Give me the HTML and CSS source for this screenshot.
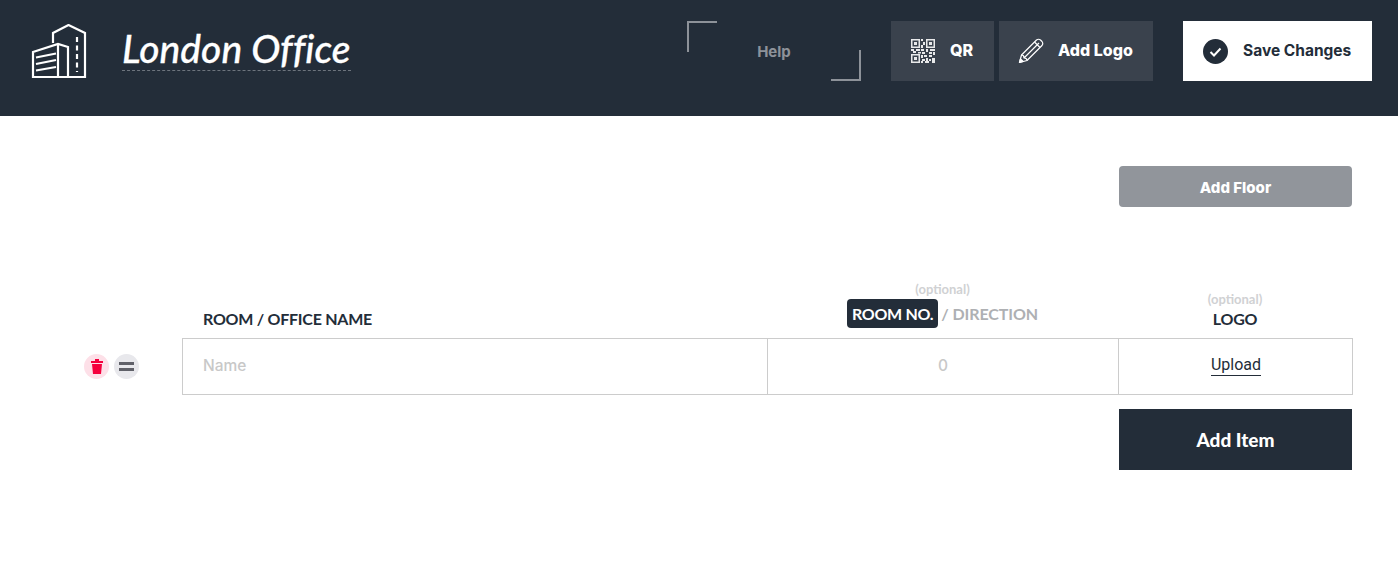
FILE: index.html
```html
<!DOCTYPE html>
<html lang="en">
<head>
	<meta charset="UTF-8">
	<title>London Office</title>
	<link rel="stylesheet" href="styles.css">
</head>
<body>
	<header class="topbar">
		<svg class="building" width="56" height="56" viewBox="0 0 56 56" fill="none" stroke="#fff" stroke-width="2.200">
			<path d="M22 19V9L37.500 1 54 9V53H2V28L27 20 37 23V53"/>
			<path d="M27 20V53M5 33.500L25 29.500M5 40L25 36M5 46.500L25 43"/>
			<path d="M46 13V48" stroke-dasharray="5 3.500"/>
		</svg>
		<h1 class="title">London Office</h1>
		<a class="help">Help</a>
		<div class="tools">
			<a class="tool tool-qr">
				<svg width="24" height="24" viewBox="0 0 24 24" fill="#e8e9ea">
					<path fill-rule="evenodd" d="M0 0h9v9H0zM1.500 1.500v6h6v-6zM15 0h9v9h-9zM16.500 1.500v6h6v-6zM0 15h9v9H0zM1.500 16.500v6h6v-6z"/>
					<path d="M3 3h3v3H3zM18 3h3v3h-3zM3 18h3v3H3zM10 0h2v2h-2zM12 3h2v3h-2zM10 6h2v3h-2zM0 10h3v2H0zM5 10h4v2H5zM10 10h3v2h-3zM15 10h2v3h-2zM19 10h5v2h-5zM2 12h3v2H2zM7 13h3v1.500H7zM11 13h3v2h-3zM18 13h3v2h-3zM22 13h2v3h-2zM10 16h2v3h-2zM13 16h3v2h-3zM18 16h3v2h-3zM11 20h3v2h-3zM15 19h2v3h-2zM18 20h2v2h-2zM21 19h3v5h-3zM10 22h2v2h-2zM14 22h4v2h-4z"/>
				</svg>
				<span class="tool-label">QR</span>
			</a>
			<a class="tool tool-logo">
				<svg width="26" height="26" viewBox="0 0 26 26" fill="none" stroke="#fff" stroke-width="1.200" stroke-linejoin="round">
					<path d="M1.500 24.500L3.500 17 18.500 2Q20.500.500 22.500 2L24 3.500Q25.500 5.500 24 7.500L9 22.500z"/>
					<path d="M3.500 17Q6 17 6 20 9 20 9 22.500M6 20L21 5M16.500 4L22 9.500"/>
					<path d="M1.500 24.500L2.500 20.800 5.200 23.500z" fill="#fff"/>
				</svg>
				<span class="tool-label">Add Logo</span>
			</a>
		</div>
		<a class="save">
			<svg width="25" height="25" viewBox="0 0 25 25">
				<circle cx="12.500" cy="12.500" r="12.500" fill="#232d39"/>
				<path d="M7.500 13l3.500 3.500 6.500-7" fill="none" stroke="#fff" stroke-width="2"/>
			</svg>
			<span class="tool-label">Save Changes</span>
		</a>
	</header>

	<main class="content">
		<div class="floor-bar">
			<a class="add-floor">Add Floor</a>
		</div>

		<div class="col-heads">
			<div class="head head-name">ROOM / OFFICE NAME</div>
			<div class="head head-room">
				<span class="optional">(optional)</span>
				<div class="room-switch"><span class="room-on">ROOM NO.</span> <span class="room-off">/ DIRECTION</span></div>
			</div>
			<div class="head head-logo">
				<span class="optional">(optional)</span>
				<div>LOGO</div>
			</div>
		</div>

		<div class="item-row">
			<div class="handles">
				<a class="round round-delete">
					<svg width="12" height="15" viewBox="0 0 12 15" fill="#f5003d">
						<path d="M0 2h4V0h4v2h4v2H0zM1 5h10l-1 10H2z"/>
					</svg>
				</a>
				<a class="round round-move"><span class="bars"></span></a>
			</div>
			<div class="cells">
				<div class="cell cell-name">Name</div>
				<div class="cell cell-room">0</div>
				<div class="cell cell-logo"><a class="upload">Upload</a></div>
			</div>
		</div>

		<div class="item-foot">
			<a class="add-item">Add Item</a>
		</div>
	</main>
</body>
</html>
```

FILE: styles.css
```css
html,body {
	padding: 0;
	margin: 0;
}
body {
	background: #fff;
	font-family: "Inter", "Liberation Sans", sans-serif;
	color: #232d39;
}
a {
	display: block;
}

/* top bar */
.topbar {
	display: flex;
	align-items: center;
	height: 116px;
	padding: 0 26px 14px 31px;
	box-sizing: border-box;
	background: #232d39;
}
.building {
	margin-top: 1px;
}
.title {
	margin: 0 0 4px 35px;
	padding-bottom: 2px;
	border-bottom: 1px dashed #6d747d;
	font: italic 500 39px/40px "Lato", sans-serif;
	letter-spacing: 0.02px;
	-webkit-text-stroke: 0.3px #fff;
	color: #fff;
}
.help {
	position: relative;
	width: 174px;
	height: 60px;
	margin-left: auto;
	font-size: 15px;
	font-weight: 700;
	line-height: 61px;
	text-align: center;
	color: #8d9299;
}
.help::before, .help::after {
	content: "";
	position: absolute;
	width: 28px;
	height: 29px;
	border: 0 solid #8d9299;
}
.help::before {
	top: 0;
	left: 0;
	border-width: 2px 0 0 2px;
}
.help::after {
	right: 0;
	bottom: 0;
	border-width: 0 2px 2px 0;
}
.tools {
	display: flex;
	gap: 5px;
	margin-left: 30px;
}
.tool {
	display: flex;
	align-items: center;
	height: 60px;
	background: #3a424d;
	font-size: 16px;
	font-weight: 800;
	color: #fff;
}
.tool-label {
	margin-bottom: 2px;
}
.tool-qr {
	width: 103px;
	padding-left: 20px;
	gap: 15px;
	box-sizing: border-box;
}
.tool-logo {
	width: 154px;
	padding-left: 19px;
	gap: 14px;
	box-sizing: border-box;
}
.save {
	display: flex;
	align-items: center;
	gap: 15px;
	width: 189px;
	height: 60px;
	margin-left: 30px;
	padding-left: 20px;
	box-sizing: border-box;
	background: #fff;
	font-size: 15.500px;
	font-weight: 700;
	white-space: nowrap;
	color: #232d39;
}

/* content */
.content {
	padding: 50px 46px 0 0;
}
.floor-bar {
	display: flex;
	justify-content: flex-end;
}
.add-floor {
	width: 233px;
	height: 41px;
	border-radius: 4px;
	background: #91959b;
	font-size: 15px;
	font-weight: 800;
	line-height: 43px;
	text-align: center;
	color: #fff;
}

.col-heads {
	display: flex;
	align-items: flex-end;
	margin: 72px 0 0 182px;
	padding-bottom: 9px;
	font: 700 16px/20px "Lato", sans-serif;
	letter-spacing: -0.25px;
}
.head-name {
	width: 564px;
	padding-left: 21px;
}
.head-room {
	width: 351px;
	margin-bottom: 1px;
	text-align: center;
}
.head-logo {
	flex: 1;
	text-align: center;
}
.optional {
	display: block;
	font-size: 13px;
	line-height: 20px;
	letter-spacing: 0;
	color: #d0d1d3;
}
.room-switch {
	display: flex;
	justify-content: center;
	align-items: center;
	gap: 3px;
	height: 29px;
}
.room-on {
	padding: 0 5px;
	border-radius: 4px;
	background: #232d39;
	line-height: 29px;
	letter-spacing: -0.3px;
	color: #fff;
}
.room-off {
	letter-spacing: -0.1px;
	color: #aeb0b3;
}

.item-row {
	display: flex;
	align-items: center;
	margin-right: -1px;
}
.handles {
	display: flex;
	gap: 5px;
	width: 98px;
	padding-left: 84px;
}
.round {
	display: flex;
	justify-content: center;
	align-items: center;
	width: 25px;
	height: 25px;
	border-radius: 50%;
}
.round-delete {
	background: #fde0e8;
}
.round-move {
	background: #e8e8ec;
}
.bars {
	width: 15px;
	height: 3px;
	border-top: 3px solid #5f6068;
	border-bottom: 3px solid #5f6068;
}
.cells {
	display: flex;
	flex: 1;
	height: 57px;
	box-sizing: border-box;
	border: 1px solid #ccc;
}
.cell {
	line-height: 53px;
	font-size: 15.500px;
	font-weight: 500;
	color: #c8c8c8;
}
.cell-name {
	width: 585px;
	padding-left: 20px;
	box-sizing: border-box;
	border-right: 1px solid #ccc;
}
.cell-room {
	width: 351px;
	box-sizing: border-box;
	border-right: 1px solid #ccc;
	text-align: center;
}
.cell-logo {
	display: flex;
	flex: 1;
	justify-content: center;
	align-items: center;
	padding: 0 0 4px 1px;
}
.upload {
	border-bottom: 1px solid #232d39;
	font: 16px/21px "Roboto", sans-serif;
	color: #232d39;
}
.item-foot {
	display: flex;
	justify-content: flex-end;
	margin-top: 14px;
}
.add-item {
	width: 233px;
	height: 61px;
	background: #232d39;
	font: 900 19px/61px "Lato", sans-serif;
	text-align: center;
	color: #fff;
}
```
